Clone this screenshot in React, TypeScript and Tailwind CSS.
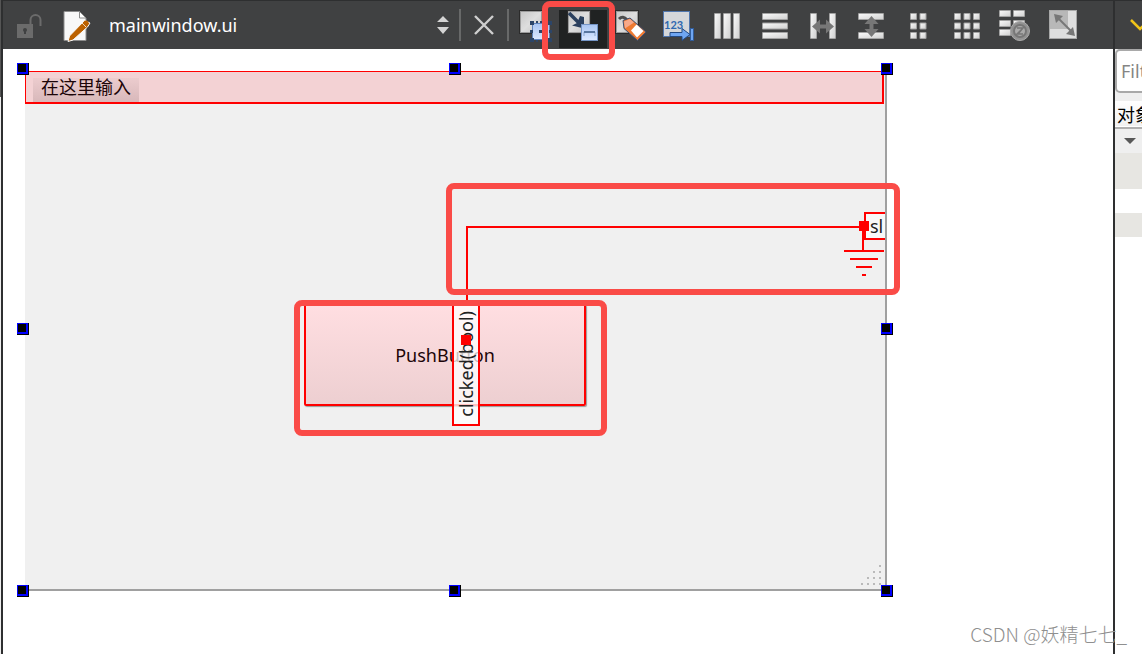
import React from 'react';

interface ToolProps {
  label: string;
  active?: boolean;
  children: React.ReactNode;
}

// Every toolbar icon is drawn on the full 48x49 button area
const Tool: React.FC<ToolProps> = ({ label, active, children }) => (
  <button type="button" aria-label={label} aria-pressed={active} className="w-12 h-[49px] shrink-0">
    <svg viewBox="0 0 48 49" className="block w-12 h-[49px]">
      {active && <rect x="0" y="9" width="48" height="38" fill="#202222" />}
      {children}
    </svg>
  </button>
);

const Bar: React.FC<{ x: number; y: number; w: number; h: number }> = ({ x, y, w, h }) => (
  <g>
    <rect x={x} y={y} width={w} height={h} rx="1" fill="#a3a3a3" />
    <rect x={x + 1} y={y + 1} width={w - 2} height={h - 2} fill="url(#bar)" />
  </g>
);

const Sheet: React.FC = () => (
  <g>
    <rect x="8.5" y="9.5" width="23" height="23" fill="none" stroke="#2b2b2b" />
    <rect x="9.5" y="10.5" width="21" height="21" fill="url(#sheet)" stroke="#9b9b9b" />
  </g>
);

const cellRows = [12, 21.5, 31];

const Toolbar: React.FC = () => (
  <header className="flex h-[49px] shrink-0 items-center overflow-hidden bg-[#404142] border-t border-[#2e2f30]">
    <Tool label="Lock">
      <rect x="14" y="23" width="16" height="14" fill="#6b6b6b" />
      <path d="M27.5 24V19a5 5 0 0 1 10 0V25" fill="none" stroke="#6b6b6b" strokeWidth="2" />
      <circle cx="22" cy="29" r="2" fill="#404142" />
      <path d="M21 29h2v4h-2z" fill="#404142" />
    </Tool>
    <svg viewBox="0 0 48 49" className="w-12 h-[49px] shrink-0">
      <path d="M13 10.500H28.500L35 17V39.500H13z" fill="#f8f8f8" stroke="#8c8c8c" />
      <path d="M28.500 10.500V17H35z" fill="#fff" stroke="#8c8c8c" />
      <path d="M17 40.500L18.500 35 33.500 19.500 39 22 36.500 26 22 39z" fill="#bb6100" stroke="#fafafa" />
      <path d="M31 22l4 4" stroke="#f5e2c8" />
      <circle cx="35" cy="22" r="2.500" fill="#bb6100" />
    </svg>
    <div className="relative w-[360px] shrink-0">
      <select
        aria-label="Open document"
        className="w-full h-10 appearance-none bg-transparent pl-[10px] font-['Noto_Sans',sans-serif] text-[18px] text-white"
      >
        <option>mainwindow.ui</option>
      </select>
      <svg viewBox="0 0 12 20" className="pointer-events-none absolute right-[10px] top-[10px] h-5 w-3">
        <path d="M6 1l6 6H0zM0 12h12l-6 7z" fill="#d4d4d4" />
      </svg>
    </div>
    <div className="h-8 w-[2px] shrink-0 bg-[#686969]" />
    <button type="button" aria-label="Close document" className="flex w-[46px] shrink-0 justify-center">
      <svg viewBox="0 0 22 22" className="size-[22px]">
        <path d="M2 2l18 18M20 2L2 20" stroke="#cfcfcf" strokeWidth="2.400" />
      </svg>
    </button>
    <div className="mr-[2px] h-8 w-[2px] shrink-0 bg-[#686969]" />

    <Tool label="Edit Widgets">
      <defs>
        <linearGradient id="bar" x1="0" y1="0" x2="1" y2="1">
          <stop offset="0" stopColor="#f8f8f8" />
          <stop offset="1" stopColor="#d2d2d2" />
        </linearGradient>
        <linearGradient id="sheet" x1="0" y1="0" x2="1" y2="1">
          <stop offset="0" stopColor="#c6c6c6" />
          <stop offset="0.5" stopColor="#dedede" />
          <stop offset="1" stopColor="#c2c2c2" />
        </linearGradient>
        <linearGradient id="blue" x1="0" y1="0" x2="0" y2="1">
          <stop offset="0" stopColor="#a9c5f2" />
          <stop offset="1" stopColor="#dce9ff" />
        </linearGradient>
      </defs>
      <Sheet />
      <rect x="21.500" y="22.500" width="17" height="16" fill="url(#blue)" stroke="#5f84bd" />
      <path d="M19 20h4v4h-4zM37 20h4v4h-4zM19 37h4v4h-4zM37 37h4v4h-4zM28 29h3v3h-3zM19 29h3v3h-3zM38 29h3v3h-3z" fill="#2c4568" />
      <path d="M25 21h10M25 40h10" stroke="#2c4568" strokeWidth="2" strokeDasharray="2 2" />
    </Tool>
    <Tool label="Edit Signals/Slots" active>
      <Sheet />
      <path d="M10 12l10 10" stroke="#2b405e" strokeWidth="3.500" />
      <path d="M25 27.500l-12-3 5-2.500 3-7 4 1z" fill="#2b405e" />
      <rect x="22.500" y="23.500" width="16" height="16" fill="url(#blue)" stroke="#7595c6" />
      <path d="M25 35v-4h11v4" fill="none" stroke="#8ba5cb" strokeWidth="1" />
      <path d="M25 31h11" stroke="#59779f" strokeWidth="2" />
    </Tool>
    <Tool label="Edit Buddies">
      <Sheet />
      <path d="M12 18q4-4 8 1" fill="none" stroke="#4c4c4c" strokeWidth="3" />
      <path d="M16 19.500l7-2.500 16 14-8.500 8.500-13.500-12z" fill="#ee7a32" stroke="#3d4f73" />
      <path d="M17 20.500l6-2.500 4 3.500-9 6z" fill="#f7a98a" />
      <path d="M29.500 23.500l7 6.500-6.500 6.500-6-7z" fill="#fff" />
    </Tool>
    <Tool label="Edit Tab Order">
      <rect x="8.500" y="10.500" width="26" height="25" fill="#d5d7da" stroke="#5177ae" />
      <text x="9" y="28" className="fill-[#2f68b0] font-['Lato',sans-serif] text-[11px] font-bold">123</text>
      <path d="M15 31.500h12v-4l8 6-8 6v-4H15z" fill="#6fa6f2" stroke="#244a82" />
      <rect x="35.500" y="27.500" width="3" height="12" fill="#6fa6f2" stroke="#315c99" />
    </Tool>
    <Tool label="Lay Out Horizontally">
      <Bar x={11} y={12} w={7} h={26} />
      <Bar x={20} y={12} w={8} h={26} />
      <Bar x={30} y={12} w={7} h={26} />
    </Tool>
    <Tool label="Lay Out Vertically">
      <Bar x={11} y={12} w={26} h={7} />
      <Bar x={11} y={21.5} w={26} h={7} />
      <Bar x={11} y={31} w={26} h={7} />
    </Tool>
    <Tool label="Lay Out Horizontally in Splitter">
      <Bar x={11} y={12} w={7} h={26} />
      <Bar x={30} y={12} w={7} h={26} />
      <path d="M13 25.500l8-7v5h6v-5l8 7-8 7v-5h-6v5z" fill="#777" />
    </Tool>
    <Tool label="Lay Out Vertically in Splitter">
      <Bar x={11} y={12} w={26} h={7} />
      <Bar x={11} y={31} w={26} h={7} />
      <path d="M24.500 15l7 8h-5v5h5l-7 8-7-8h5v-5h-5z" fill="#777" />
    </Tool>
    <Tool label="Lay Out in a Form Layout">
      {cellRows.map((y) => (
        <g key={y}>
          <Bar x={15} y={y} w={7} h={7} />
          <Bar x={24.5} y={y} w={7} h={7} />
        </g>
      ))}
    </Tool>
    <Tool label="Lay Out in a Grid">
      {cellRows.map((y) => (
        <g key={y}>
          <Bar x={11} y={y} w={7} h={7} />
          <Bar x={20.5} y={y} w={7} h={7} />
          <Bar x={30} y={y} w={7} h={7} />
        </g>
      ))}
    </Tool>
    <Tool label="Break Layout">
      <Bar x={8} y={9} w={12} h={7} />
      <Bar x={22} y={9} w={12} h={7} />
      <Bar x={8} y={19} w={12} h={7} />
      <Bar x={22} y={19} w={12} h={7} />
      <Bar x={8} y={28} w={12} h={7} />
      <circle cx="29" cy="30" r="9.500" fill="#929292" stroke="#aaa" />
      <circle cx="29" cy="30" r="6" fill="#aaa" stroke="#777" strokeWidth="2" />
      <path d="M24.500 34.500l9-9M26 27h6l-5 6h5" fill="none" stroke="#777" strokeWidth="1.500" />
    </Tool>
    <Tool label="Adjust Size">
      <rect x="10.500" y="9.500" width="27" height="28" fill="#dedede" stroke="#a8a8a8" />
      <rect x="11" y="10" width="18" height="18" fill="#b8b8b8" />
      <path d="M18 16l16 16" stroke="#777" strokeWidth="2" />
      <path d="M15 13l9 2-7 7zM36 35l-9-2 7-7z" fill="#777" />
    </Tool>
  </header>
);

const handles = [
  'left-[-8px] top-[-8px]',
  'left-[424px] top-[-8px]',
  'left-[856px] top-[-8px]',
  'left-[-8px] top-[252px]',
  'left-[856px] top-[252px]',
  'left-[-8px] top-[514px]',
  'left-[424px] top-[514px]',
  'left-[856px] top-[514px]',
];

// The form being edited: widgets and connections sit at free coordinates
const FormEditor: React.FC = () => (
  <div className="relative ml-[22px] mt-[22px] h-[520px] w-[862px] shrink-0 border-r-2 border-b-2 border-[#a0a0a0] bg-[#f0f0f0]">
    <div className="mr-px flex h-[33px] items-end border border-r-2 border-b-2 border-[#f00] bg-[#f3d2d4] pl-[7px]">
      <button
        type="button"
        className="h-6 w-[106px] bg-linear-to-b from-[#ecccce] to-[#d8b8ba] pb-2 pl-2 text-left font-['Noto_Sans_CJK_SC',sans-serif] text-[18px] leading-4 text-[#1c0508]"
      >
        在这里输入
      </button>
    </div>

    <button
      type="button"
      className="absolute left-[279px] top-[233px] h-[102px] w-[282px] rounded-[2px] border-2 border-[#f00] bg-linear-to-b from-[#ffdee1] to-[#edcfd1] font-['Noto_Sans',sans-serif] text-[18px] text-[#1c0508] shadow-[1px_1px_1px_#999]"
    >
      PushButton
    </button>

    <svg viewBox="0 0 860 518" className="pointer-events-none absolute left-0 top-0 h-[518px] w-[860px]">
      <path d="M442 233V156H834" fill="none" stroke="#f00" strokeWidth="2" />
      <path d="M838 160V180M819 180h40M825 188h28M831 196h16M837 204h4" stroke="#f00" strokeWidth="2" />
      <path d="M854 494h2v2h-2zM848 500h2v2h-2zM854 500h2v2h-2zM842 506h2v2h-2zM848 506h2v2h-2zM854 506h2v2h-2zM836 512h2v2h-2zM842 512h2v2h-2zM848 512h2v2h-2zM854 512h2v2h-2z" fill="#bababa" />
    </svg>

    <div className="absolute left-[427px] top-[231px] flex h-[124px] w-7 items-center justify-center border-2 border-[#f00] bg-white/75">
      <span className="rotate-180 font-['Noto_Sans',sans-serif] text-[18px] leading-6 text-[#222] [writing-mode:vertical-rl]">
        clicked(bool)
      </span>
    </div>
    <div className="absolute left-[436px] top-[264px] size-[10px] bg-[#f00]" />

    <div className="absolute left-[839px] top-[141px] h-7 w-[21px] border-2 border-r-0 border-[#f00] bg-[#f8f8f8] pl-1 font-['Noto_Sans',sans-serif] text-[18px] leading-6 text-[#222]">
      sl
    </div>
    <div className="absolute left-[834px] top-[150px] size-[10px] bg-[#f00]" />

    {handles.map((pos) => (
      <div key={pos} className={`absolute size-3 border-r border-b border-black bg-[#00f] pl-px pt-px ${pos}`}>
        <div className="size-2 bg-black" />
      </div>
    ))}
  </div>
);

const ObjectPanel: React.FC = () => (
  <aside className="flex w-[29px] shrink-0 flex-col overflow-hidden border-l-2 border-[#2e2f30] bg-white">
    <div className="flex h-[49px] shrink-0 items-center border-t border-[#2e2f30] bg-[#404142] pl-[15px]">
      <svg viewBox="0 0 20 14" className="h-[14px] w-5 shrink-0">
        <path d="M1 2l9 9 9-9" fill="none" stroke="#f0c419" strokeWidth="2.500" />
      </svg>
    </div>
    <div className="shrink-0 bg-[#efefef] pb-2">
      <input
        type="text"
        aria-label="Filter"
        placeholder="Filter"
        className="block h-11 w-[200px] rounded-[5px] border-2 border-[#a9a9a9] bg-white pl-1 font-['Noto_Sans',sans-serif] text-[18px] placeholder:text-[#858585]"
      />
    </div>
    <table className="w-[200px] table-fixed border-collapse">
      <thead>
        <tr className="h-[27px] border-b-2 border-[#b0b0b0] bg-linear-to-b from-white to-[#f0f0f0]">
          <th className="p-0 pl-[2px] text-left font-['Noto_Sans_CJK_SC',sans-serif] text-[18px] font-normal leading-6 text-black">
            对象
          </th>
        </tr>
      </thead>
      <tbody>
        <tr className="h-[25px] bg-[#efefef]">
          <td className="p-0 pl-[9px]">
            <svg viewBox="0 0 12 6" className="h-[6px] w-3">
              <path d="M0 0h12L6 6z" fill="#585858" />
            </svg>
          </td>
        </tr>
        <tr className="h-9 bg-[#e7e6e2]"><td /></tr>
        <tr className="h-6 bg-white"><td /></tr>
        <tr className="h-6 bg-[#e7e6e2]"><td /></tr>
      </tbody>
    </table>
  </aside>
);

const App: React.FC = () => (
  <div className="relative flex h-screen overflow-hidden bg-white">
    <div className="flex w-[3px] shrink-0 flex-col border-r-2 border-[#2e2f30] bg-[#eee]">
      <div className="h-[97px] bg-[#555]" />
    </div>
    <main className="flex min-w-0 flex-1 flex-col overflow-hidden">
      <Toolbar />
      <FormEditor />
    </main>
    <ObjectPanel />

    {/* highlight boxes */}
    <div className="pointer-events-none absolute left-[542px] top-px h-[59px] w-[73px] rounded-[8px] border-6 border-[#fa4b47]" />
    <div className="pointer-events-none absolute left-[446px] top-[183px] h-[112px] w-[454px] rounded-[8px] border-6 border-[#fa4b47]" />
    <div className="pointer-events-none absolute left-[294px] top-[300px] h-[136px] w-[313px] rounded-[8px] border-6 border-[#fa4b47]" />

    <p className="pointer-events-none absolute right-[15px] bottom-2 font-['Noto_Sans_CJK_SC',sans-serif] text-[19px] font-light leading-6 text-[#8f8f8f]">
      CSDN @妖精七七_
    </p>
  </div>
);

export default App;
